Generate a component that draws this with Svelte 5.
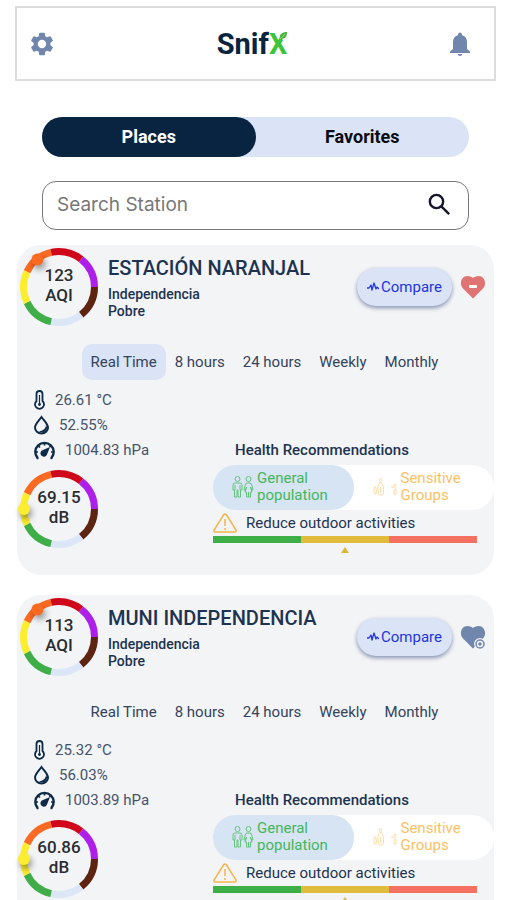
<script>
  const ringColors = ['#5e2412', '#dbe6f7', '#3fae49', '#fcee2f', '#fb6a23', '#d0061a', '#ae20ea'];
  const periods = ['Real Time', '8 hours', '24 hours', 'Weekly', 'Monthly'];

  let activeTab = $state('Places');
  let search = $state('');

  let stations = $state([
    {
      name: 'ESTACIÓN NARANJAL',
      district: 'Independencia',
      quality: 'Pobre',
      aqi: 123,
      temperature: '26.61',
      humidity: '52.55',
      pressure: '1004.83',
      noise: '69.15',
      favorite: true,
      period: 'Real Time',
      group: 'general'
    },
    {
      name: 'MUNI INDEPENDENCIA',
      district: 'Independencia',
      quality: 'Pobre',
      aqi: 113,
      temperature: '25.32',
      humidity: '56.03',
      pressure: '1003.89',
      noise: '60.86',
      favorite: false,
      period: '',
      group: 'general'
    }
  ]);

  let visible = $derived(
    stations.filter(
      (s) =>
        s.name.toLowerCase().includes(search.toLowerCase()) &&
        (activeTab === 'Places' || s.favorite)
    )
  );

  // knob position on the ring, angle in degrees clockwise from 3 o'clock
  function knob(angle) {
    const rad = (angle * Math.PI) / 180;
    return { x: 40 + 35 * Math.cos(rad), y: 40 + 35 * Math.sin(rad) };
  }
</script>

{#snippet gauge(value, unit, angle, color)}
  <div class="gauge">
    <svg viewBox="0 0 80 80" aria-hidden="true">
      {#each ringColors as stroke, i}
        <circle
          cx="40"
          cy="40"
          r="35.5"
          fill="none"
          {stroke}
          stroke-width="7"
          pathLength="7"
          stroke-dasharray="1 6"
          stroke-dashoffset={-i}
        />
      {/each}
      <circle class="knob" cx={knob(angle).x} cy={knob(angle).y} r="6" fill={color} />
    </svg>
    <div class="gauge-text">
      <span>{value}</span>
      <span>{unit}</span>
    </div>
  </div>
{/snippet}

<header class="topbar">
  <button class="icon-btn" aria-label="Settings">
    <svg width="28" height="28" viewBox="0 0 24 24" fill="#7186ad">
      <path
        d="M19.14 12.94c.04-.3.06-.61.06-.94 0-.32-.02-.64-.07-.94l2.03-1.58a.49.49 0 0 0 .12-.61l-1.92-3.32a.49.49 0 0 0-.59-.22l-2.39.96c-.5-.38-1.03-.7-1.62-.94l-.36-2.54a.48.48 0 0 0-.48-.41h-3.84a.47.47 0 0 0-.47.41l-.36 2.54c-.59.24-1.13.57-1.62.94l-2.39-.96a.48.48 0 0 0-.59.22L2.74 8.87a.48.48 0 0 0 .12.61l2.03 1.58c-.05.3-.09.63-.09.94s.02.64.07.94l-2.03 1.58a.49.49 0 0 0-.12.61l1.92 3.32c.12.22.37.29.59.22l2.39-.96c.5.38 1.03.7 1.62.94l.36 2.54c.05.24.24.41.48.41h3.84c.24 0 .44-.17.47-.41l.36-2.54c.59-.24 1.13-.56 1.62-.94l2.39.96c.22.08.47 0 .59-.22l1.92-3.32a.48.48 0 0 0-.12-.61zM12 15.6A3.6 3.6 0 1 1 12 8.4a3.6 3.6 0 0 1 0 7.2z"
      />
    </svg>
  </button>
  <div class="logo">
    <span>Snif</span><span class="logo-x">X</span>
    <svg class="leaf" width="8" height="8" viewBox="0 0 8 8" aria-hidden="true">
      <path d="M0 0H8V8H4L0 3Z" fill="#fff" />
      <path d="M8 0C3 0 0 2 1 7C6 7 8 5 8 0Z" fill="#4cb53c" />
      <path d="M1 7L6 2" stroke="#a9dc9c" stroke-width="0.7" />
    </svg>
  </div>
  <button class="icon-btn" aria-label="Notifications">
    <svg width="24" height="24" viewBox="0 0 24 24" fill="#7186ad">
      <path
        d="M12 24c1.2 0 2.2-.8 2.2-2H9.8c0 1.2 1 2 2.2 2zM19 17v-7c0-3.5-1.9-6-5-6.7V2.5C14 1.5 13 .5 12 .5s-2 1-2 2v.8C6.9 4 5 6.5 5 10v7l-3 2.5V21h20v-1.5z"
      />
    </svg>
  </button>
</header>

<main>
  <nav class="tabs">
    {#each ['Places', 'Favorites'] as tab}
      <button class:active={activeTab === tab} onclick={() => (activeTab = tab)}>{tab}</button>
    {/each}
  </nav>

  <div class="search">
    <input type="text" placeholder="Search Station" aria-label="Search Station" bind:value={search} />
    <svg
      width="29"
      height="29"
      viewBox="0 0 24 24"
      fill="none"
      stroke="#17172c"
      stroke-width="2"
      aria-hidden="true"
    >
      <circle cx="9.5" cy="9.5" r="5.5" />
      <path d="M13.5 13.5L20 20" />
    </svg>
  </div>

  <div class="stations">
    {#each visible as station}
      <article class="card">
        <div class="card-head">
          {@render gauge(station.aqi, 'AQI', 232, '#fb6a23')}
          <div class="place">
            <h2>{station.name}</h2>
            <p>{station.district}</p>
            <p>{station.quality}</p>
          </div>
          <button class="compare">
            <svg width="12" height="10" viewBox="0 0 12 10" aria-hidden="true">
              <path
                d="M0 6H2L4 3L5 8L7 1L9 7L10 5L12 7"
                fill="none"
                stroke="#2335df"
                stroke-width="1.3"
                stroke-linejoin="round"
              />
            </svg>
            Compare
          </button>
          <button
            class="icon-btn"
            aria-label="Favorite"
            onclick={() => (station.favorite = !station.favorite)}
          >
            <svg width="26" height="26" viewBox="0 0 26 26">
              <path
                d="M13 24.5L3 14.5C-1 10 1 2 7.5 2C10 2 12 3 13 4C14 3 16 2 18.5 2C25 2 27 10 23 14.5Z"
                fill={station.favorite ? '#e07474' : '#7186ad'}
              />
              {#if station.favorite}
                <rect x="9" y="11" width="8" height="3" rx="1" fill="#fff" />
              {:else}
                <circle cx="20" cy="20" r="6" fill="#f3f4f6" />
                <circle cx="20" cy="20" r="4" fill="none" stroke="#7186ad" stroke-width="1.5" />
                <path d="M18 20H22M20 18V22" stroke="#7186ad" stroke-width="1.3" />
              {/if}
            </svg>
          </button>
        </div>

        <div class="periods">
          {#each periods as period}
            <button
              class:selected={station.period === period}
              onclick={() => (station.period = period)}>{period}</button
            >
          {/each}
        </div>

        <div class="details">
          <div class="readings">
            <div class="reading">
              <svg width="13" height="20" viewBox="0 0 13 20" fill="none" stroke="#0d2a47">
                <path d="M3.5 11V4a3 3 0 0 1 6 0v7a4.5 4.5 0 1 1-6 0z" stroke-width="1.8" />
                <path d="M6.5 5V14" stroke-width="1.2" />
                <circle cx="6.5" cy="14.5" r="1.4" fill="#0d2a47" stroke="none" />
              </svg>
              <span>{station.temperature} °C</span>
            </div>
            <div class="reading">
              <svg width="17" height="20" viewBox="0 0 17 20">
                <path
                  d="M8.5 2C6 5.5 2 9 2 12.5a6.5 6 0 0 0 13 0C15 9 11 5.5 8.5 2z"
                  fill="none"
                  stroke="#0d2a47"
                  stroke-width="2"
                />
                <path d="M13 9.5C13 13 11 15.5 6 16.5C9 19 14 17 14 12.5Z" fill="#0d2a47" />
              </svg>
              <span>{station.humidity}%</span>
            </div>
            <div class="reading">
              <svg width="23" height="20" viewBox="0 0 23 20" fill="none" stroke="#0d2a47">
                <path d="M5.5 18H4.5A9.2 9.2 0 1 1 18.5 18H17.5" stroke-width="2.4" />
                <path
                  d="M2 12H5M18 12H21M5 5.5L7 7.5M11.5 2V5.5M18 5.5L16.5 7"
                  stroke-width="1.7"
                />
                <path d="M17 7L14 14.5A3.4 3.4 0 1 1 10 10Z" fill="#0d2a47" stroke="none" />
              </svg>
              <span>{station.pressure} hPa</span>
            </div>
            {@render gauge(station.noise, 'dB', 180, '#fcee2f')}
          </div>

          <div class="health">
            <h3>Health Recommendations</h3>
            <div class="groups">
              <button
                class="general"
                class:chosen={station.group === 'general'}
                onclick={() => (station.group = 'general')}
              >
                <svg width="22" height="24" viewBox="0 0 22 24" fill="none" stroke="#65c47c">
                  <circle cx="5.5" cy="4" r="2.5" />
                  <circle cx="16.5" cy="4" r="2.5" />
                  <path
                    d="M3 8H8Q10 8 10 10V15H8.5V22H6V15H5V22H2.5V15H1V10Q1 8 3 8ZM3 10V15M8 10V15"
                  />
                  <path
                    d="M14.5 8H18.5Q20 9 21 15H19.5L18.5 12L20 17H18.5V22H14.5V17H13L14.5 12L13.5 15H12Q13 9 14.5 8ZM16.5 17V22"
                  />
                </svg>
                <span>General population</span>
              </button>
              <button
                class="sensitive"
                class:chosen={station.group === 'sensitive'}
                onclick={() => (station.group = 'sensitive')}
              >
                <svg width="25" height="24" viewBox="0 0 25 24" fill="none" stroke="#fbdca6">
                  <circle cx="7.5" cy="5" r="1.5" />
                  <path
                    d="M6.5 7.5Q4 12 5 16Q5 20 7 20H9Q11 20 10.5 16Q11 11 8.5 7.5ZM7.5 12V18"
                  />
                  <path d="M1.5 12Q0 16 1.5 19H3Q4 15 2.5 12Z" />
                  <circle cx="22" cy="10" r="1" />
                  <path d="M18 12H21Q23 12 23 15V19H21V14" />
                </svg>
                <span>Sensitive Groups</span>
              </button>
            </div>
            <div class="advice">
              <svg width="24" height="20" viewBox="0 0 24 20" fill="none" stroke="#f6b54d">
                <path
                  d="M10.5 2Q12 0 13.5 2L23 17Q23.5 19 22 19H2Q0.5 19 1 17Z"
                  stroke-width="1.5"
                />
                <path d="M12 6V13M12 15V17" stroke-width="1.5" />
              </svg>
              <span>Reduce outdoor activities</span>
            </div>
            <div class="scale">
              <span class="good"></span>
              <span class="medium"></span>
              <span class="bad"></span>
            </div>
            <div class="pointer">
              <svg width="8" height="6" viewBox="0 0 8 6" aria-hidden="true">
                <path d="M4 0L8 6H0Z" fill="#dcb63a" />
              </svg>
            </div>
          </div>
        </div>
      </article>
    {/each}
  </div>
</main>

<style>
  :global(body) {
    background: #fff;
    font-family: Roboto, 'Liberation Sans', sans-serif;
    color: #1d3350;
  }

  button {
    font: inherit;
    color: inherit;
    background: none;
    border: none;
    padding: 0;
    cursor: pointer;
  }

  svg {
    display: block;
    flex-shrink: 0;
  }

  h2,
  h3,
  p {
    margin: 0;
  }

  .topbar {
    display: flex;
    justify-content: space-between;
    align-items: center;
    box-sizing: border-box;
    height: 75px;
    margin: 6px 11px 0 15px;
    padding: 0 22px 0 11px;
    border: 2px solid #dcdcdc;
  }

  .logo {
    position: relative;
    font-size: 29px;
    font-weight: 700;
    line-height: 36px;
    color: #0a2440;
  }

  .logo-x {
    color: #3ac43c;
  }

  .leaf {
    position: absolute;
    top: 6px;
    right: 0;
  }

  .tabs {
    display: flex;
    margin: 36px 38px 0 42px;
    border-radius: 20px;
    background: #dae4f6;
  }

  .tabs button {
    flex: 1;
    height: 40px;
    padding-bottom: 2px;
    border-radius: 20px;
    font-size: 18px;
    font-weight: 700;
    color: #0b0b12;
  }

  .tabs button.active {
    background: #082440;
    color: #fff;
  }

  .search {
    display: flex;
    align-items: center;
    box-sizing: border-box;
    height: 49px;
    margin: 24px 38px 0 42px;
    padding: 0 14px 2px;
    border: 1px solid #777;
    border-radius: 14px;
  }

  .search input {
    flex: 1;
    min-width: 0;
    padding: 0;
    border: none;
    outline: none;
    background: none;
    font-family: Inter, sans-serif;
    font-size: 19px;
    color: #17172c;
  }

  .search input::placeholder {
    color: #777;
    opacity: 1;
  }

  .stations {
    display: flex;
    flex-direction: column;
    gap: 20px;
    padding: 15px 13px 20px 17px;
  }

  .card {
    padding: 2px 0 20px 2px;
    border-radius: 24px;
    background: #f3f4f6;
  }

  .card-head {
    display: flex;
    align-items: center;
    padding-right: 8px;
  }

  .gauge {
    position: relative;
    width: 80px;
    height: 80px;
    flex-shrink: 0;
  }

  .gauge svg {
    width: 80px;
    height: 80px;
    overflow: visible;
  }

  .knob {
    filter: drop-shadow(2px 4px 3px rgba(0, 0, 0, 0.4));
  }

  .gauge-text {
    position: absolute;
    inset: 0;
    display: flex;
    flex-direction: column;
    align-items: center;
    justify-content: center;
    padding-bottom: 5px;
    font-size: 17px;
    font-weight: 500;
    line-height: 20px;
    color: #2b2c30;
  }

  .place {
    flex: 1;
    padding-left: 9px;
    font-size: 14px;
    font-weight: 500;
    line-height: 17px;
  }

  .place h2 {
    margin-bottom: 4px;
    font-size: 20px;
    font-weight: 500;
    line-height: 28px;
    white-space: nowrap;
  }

  .compare {
    display: flex;
    align-items: center;
    justify-content: center;
    gap: 2px;
    height: 38px;
    margin-right: 8px;
    padding: 0 10px;
    border-radius: 19px;
    background: #dae4f6;
    box-shadow: 0 2px 4px rgba(60, 80, 130, 0.6);
    font-size: 15px;
    color: #2335df;
  }

  .periods {
    display: flex;
    justify-content: center;
    margin-top: 17px;
    padding-left: 16px;
  }

  .periods button {
    height: 36px;
    padding: 0 9px;
    border-radius: 10px;
    font-size: 15px;
    color: #33435c;
  }

  .periods button.selected {
    background: #dae4f6;
  }

  .details {
    display: grid;
    grid-template-columns: 194px 1fr;
    align-items: end;
    padding-top: 7px;
  }

  .reading {
    display: flex;
    align-items: center;
    gap: 9px;
    height: 25px;
    padding-left: 14px;
    font-size: 15px;
    color: #45536a;
  }

  .readings .gauge {
    margin: 7px 0 6px;
  }

  .health h3 {
    padding-left: 22px;
    font-size: 15px;
    font-weight: 500;
    line-height: 20px;
  }

  .groups {
    display: grid;
    grid-template-columns: 1fr 1fr;
    margin-top: 5px;
    border-radius: 22px;
    background: #fff;
  }

  .groups button {
    display: flex;
    align-items: center;
    gap: 3px;
    height: 45px;
    padding: 0 19px 2px;
    border-radius: 22px;
    font-size: 15px;
    line-height: 17px;
    text-align: left;
  }

  .groups button.chosen {
    background: #d7e4f3;
  }

  .general {
    color: #43b75c;
  }

  .sensitive {
    color: #fbc165;
  }

  .advice {
    display: flex;
    align-items: center;
    gap: 9px;
    height: 26px;
    font-size: 15px;
  }

  .scale {
    display: flex;
    height: 7px;
    margin-right: 17px;
  }

  .scale span {
    flex: 1;
  }

  .good {
    background: #3eae47;
  }

  .medium {
    background: #e0bb3c;
  }

  .bad {
    background: #f47060;
  }

  .pointer {
    display: flex;
    justify-content: center;
    padding: 4px 18px 2px 0;
  }
</style>
